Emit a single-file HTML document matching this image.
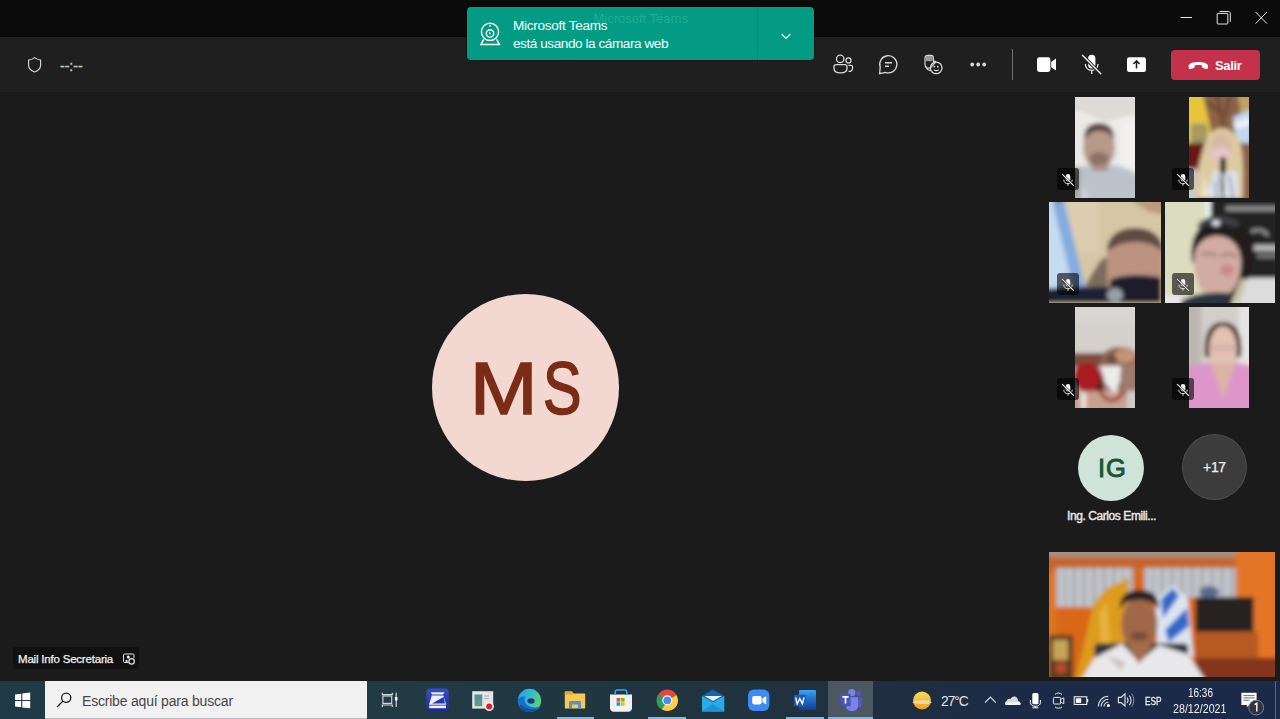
<!DOCTYPE html>
<html><head><meta charset="utf-8">
<style>
*{margin:0;padding:0;box-sizing:border-box}
html,body{width:1280px;height:719px;overflow:hidden;background:#1b1b1b;font-family:"Liberation Sans",sans-serif;position:relative}
.a{position:absolute}
svg{position:absolute;overflow:visible}
.t{position:absolute;white-space:nowrap;line-height:1}
#title{left:0;top:0;width:1280px;height:37px;background:#0b0b0b}
#tool{left:0;top:36px;width:1280px;height:57px;background:#1f1f1f;border-top:1px solid #080808;border-bottom:1px solid #191919}
#stage{left:0;top:93px;width:1280px;height:588px;background:#1b1b1b}
#toast{left:466.5px;top:7px;width:347px;height:53px;box-shadow:0 0 0 1px rgba(0,0,0,.35);background:#039b83;border-radius:4px;overflow:hidden}
#avatar{left:432px;top:294px;width:187px;height:187px;border-radius:50%;background:#f2d8d0}
#taskbar{left:0;top:681px;width:1280px;height:38px;background:linear-gradient(90deg,#1f3a44 0%,#213a44 32%,#20343f 55%,#1f2e40 70%,#1b2b47 81%,#1b2a4a 100%)}
#search{left:45px;top:681px;width:322px;height:38px;background:#f1f1f1;border-bottom:1px solid #b4b8bc}
.vid{position:absolute;overflow:hidden}
.s{position:absolute;filter:blur(2px)}
.badge{position:absolute;width:22px;height:22px;border-radius:3px;background:rgba(0,0,0,.6)}
</style></head><body>
<div id="title" class="a"></div>
<div id="tool" class="a"></div>
<div id="stage" class="a"></div>

<!-- window controls -->
<svg style="left:0;top:0" width="1280" height="37">
  <line x1="1180.5" y1="17.5" x2="1192" y2="17.5" stroke="#e6e6e6" stroke-width="1"/>
  <rect x="1217.2" y="13.4" width="10.6" height="10.6" rx="0.8" fill="none" stroke="#e6e6e6" stroke-width="1"/>
  <path d="M1219.6 11.5 H1228.6 C1229.6 11.5 1230.3 12.2 1230.3 13.2 V21.8" fill="none" stroke="#e6e6e6" stroke-width="1"/>
  <path d="M1255.6 12 L1267 23.6 M1267 12 L1255.6 23.6" stroke="#e6e6e6" stroke-width="1"/>
</svg>
<!-- toolbar left -->
<svg style="left:0;top:0" width="200" height="93">
  <path d="M34.6 57.6 C32.5 59.2 30.6 59.9 28.6 60 V65.3 C28.6 68.4 30.6 70.5 34.6 72 C38.6 70.5 40.6 68.4 40.6 65.3 V60 C38.6 59.9 36.7 59.2 34.6 57.6 Z" fill="none" stroke="#d6d6d6" stroke-width="1.15"/>
</svg>
<div class="t" style="left:60px;top:58.5px;font-size:14px;color:#c4c4c4;-webkit-text-stroke:0.4px #c4c4c4">--:--</div>

<!-- toolbar right icons -->
<svg style="left:0;top:0" width="1280" height="93">
  <g fill="none" stroke="#d8d8d8" stroke-width="1.3">
    <!-- people -->
    <circle cx="840.2" cy="58.9" r="3.7"/>
    <circle cx="848.5" cy="60.4" r="2.5"/>
    <path d="M834 66.6 C834 65.4 835 64.6 836.2 64.6 H844.8 C846 64.6 847 65.4 847 66.6 V68.6 C847 71.4 844.3 72.9 840.5 72.9 C836.7 72.9 834 71.4 834 68.6 Z"/>
    <path d="M848.4 65.3 H850.9 C851.9 65.3 852.6 65.9 852.6 66.9 V68 C852.6 70.4 851 71.5 848.6 71.4"/>
    <!-- chat -->
    <path d="M880.2 67.2 A8.6 8.6 0 1 1 885.4 72.4 L879.6 73.6 Z"/>
    <path d="M885 62.8 H892 M885 66.2 H889" stroke-width="1.4"/>
    <!-- reactions -->
    <circle cx="936.2" cy="67.9" r="5.8"/>
    <path d="M926.2 66.5 C926.6 69 928.5 70.6 931 70.6"/>
    <path d="M933.9 69.6 C935.2 71 937.4 71 938.7 69.6" stroke-width="1.1"/>
    <path d="M925 58 C925 56.2 926.5 55.3 928.5 55.3 H931 C932.6 55.3 933.4 56.5 933.4 58 V61.6 L934.4 61.2 C935.4 60.9 936 61.9 935.3 62.6 L931.2 67.2 C930.5 67.9 929.6 68.2 928.6 68.2 C926.5 68.2 925 66.6 925 64.2 Z" stroke-width="1.2"/>
  </g>
  <g fill="#d8d8d8">
    <rect x="925.8" y="56" width="6.8" height="5.2" rx="1.2" fill="#9a9a9a"/>
    <circle cx="934.4" cy="66.7" r="0.85"/><circle cx="937.8" cy="66.7" r="0.85"/>
    <circle cx="972.2" cy="64.5" r="1.9"/><circle cx="978.2" cy="64.5" r="1.9"/><circle cx="984.2" cy="64.5" r="1.9"/>
  </g>
  <line x1="1012.5" y1="49" x2="1012.5" y2="80" stroke="#707070" stroke-width="1"/>
  <!-- camera -->
  <g fill="#ffffff">
    <rect x="1037" y="57.3" width="13.4" height="14.6" rx="2.4"/>
    <path d="M1051.2 62 L1056 58.6 V70.6 L1051.2 67.2 Z"/>
  </g>
  <!-- mic off -->
  <rect x="1088.1" y="54.8" width="7.3" height="13.6" rx="3.65" fill="#ffffff"/>
  <path d="M1085.4 64 C1085.4 67.8 1088 70.3 1091.7 70.3 C1095.4 70.3 1098 67.8 1098 64 M1091.7 70.3 V74" fill="none" stroke="#e8e8e8" stroke-width="1.3"/>
  <path d="M1083 56 L1100.5 73.6" stroke="#1f1f1f" stroke-width="3.4"/>
  <path d="M1082.4 55.3 L1100.8 73.8" stroke="#f0f0f0" stroke-width="1.4" stroke-linecap="round"/>
  <!-- share -->
  <rect x="1127" y="57.2" width="19" height="14.8" rx="2.2" fill="#ffffff"/>
  <path d="M1136.5 68.5 V61 M1133.4 64 L1136.5 60.9 L1139.6 64" fill="none" stroke="#1f1f1f" stroke-width="1.5"/>
</svg>
<div class="a" style="left:1171px;top:49.5px;width:89px;height:30px;background:#c4314b;border-radius:4px"></div>
<svg style="left:0;top:0" width="1280" height="93">
  <path d="M1188.6 67 C1188 65.2 1189.8 63.4 1192 62.8 C1195.8 61.8 1200.6 61.8 1204.6 62.8 C1206.8 63.4 1208.6 65.2 1208 67 L1207.6 68.4 C1207.4 69 1206.8 69.2 1206.2 69 L1202.8 68 C1202.2 67.8 1202 67.2 1202 66.6 V65.4 C1199.6 64.8 1197 64.8 1194.6 65.4 V66.6 C1194.6 67.2 1194.4 67.8 1193.8 68 L1190.4 69 C1189.8 69.2 1189.2 69 1189 68.4 Z" fill="#ffffff"/>
</svg>
<div class="t" style="left:1215px;top:58.5px;font-size:13px;font-weight:bold;color:#ffffff;letter-spacing:-0.35px">Salir</div>

<!-- toast -->
<div id="toast" class="a">
  <div class="t" style="left:127px;top:4.5px;font-size:13px;color:rgba(170,255,230,.16);-webkit-text-stroke:0.3px rgba(170,255,230,.1)">Microsoft Teams</div>
  <div class="a" style="left:290px;top:0;width:1px;height:53px;background:rgba(0,0,0,.14)"></div>
</div>
<svg style="left:0;top:0" width="1280" height="93">
  <g fill="none" stroke="#ffffff" stroke-width="1.4">
    <circle cx="490" cy="31.8" r="8.6"/>
    <circle cx="490" cy="33.4" r="3.7"/>
    <path d="M483.6 39.4 L481 44.4 H499.4 L496.6 39.4" stroke-width="1.5"/>
    <path d="M489.6 31.8 V33.8 H491" stroke-width="0.9"/>
  </g>
  <circle cx="490" cy="25.8" r="0.9" fill="#ffffff"/>
  <path d="M781.6 34 L786 38.4 L790.4 34" fill="none" stroke="#e8f6f3" stroke-width="1.2"/>
</svg>
<div class="t" style="left:513px;top:19px;font-size:13.6px;color:#f4fffc;letter-spacing:-0.3px">Microsoft Teams</div>
<div class="t" style="left:513px;top:36.5px;font-size:13.6px;color:#f4fffc;letter-spacing:-0.45px">está usando la cámara web</div>

<!-- main avatar -->
<div id="avatar" class="a"></div>
<div class="t" style="left:470px;top:350.5px;font-size:75px;color:#7b2c17;-webkit-text-stroke:1.7px #7b2c17;transform-origin:0 0;transform:scaleX(1.08)">M</div>
<div class="t" style="left:542.5px;top:350.5px;font-size:75px;color:#7b2c17;-webkit-text-stroke:1.7px #7b2c17;transform-origin:0 0;transform:scaleX(0.77)">S</div>

<svg width="0" height="0" style="left:0;top:0">
  <defs>
    <filter id="bl1" filterUnits="userSpaceOnUse" x="-30" y="-30" width="200" height="170"><feGaussianBlur stdDeviation="2"/></filter>
    <filter id="bl2" filterUnits="userSpaceOnUse" x="-30" y="-30" width="300" height="200"><feGaussianBlur stdDeviation="2.3"/></filter>
  </defs>
</svg>
<!-- thumb 1 -->
<div class="vid" style="left:1075px;top:97px;width:60px;height:101px;background:#e9e7e4">
<svg width="60" height="101"><g filter="url(#bl1)">
  <rect x="-10" y="-10" width="80" height="121" fill="#ebe9e6"/>
  <path d="M-10 -10 H70 V16 L60.7 18 L31.8 26.4 L0.6 14.7 L-10 14 Z" fill="#dedad6"/>
  <path d="M0 15 L31.8 26.4 L60.7 18" fill="none" stroke="#f6f5f3" stroke-width="2"/>
  <rect x="46" y="24" width="14" height="50" fill="#f2f1ef"/>
  <path d="M-6 101 V80 C-2 72 6 69 16 68 H36 C48 69 56 72 64 80 V111 H-6 Z" fill="#bcc2cc"/>
  <path d="M4 80 C8 90 12 96 14 101 H-6 V84 Z" fill="#d0d4da"/>
  <rect x="17" y="58" width="16" height="16" fill="#a88a7e"/>
  <ellipse cx="24" cy="51" rx="16" ry="21" fill="#b89a8c"/>
  <path d="M9 44 C8 32 14 26 24 26 C34 26 40 32 39 44 C36 36 30 34 24 34 C18 34 12 37 9 44 Z" fill="#584840"/>
  <ellipse cx="24" cy="62" rx="10" ry="7" fill="#8c7268"/>
  <rect x="-6" y="70" width="12" height="31" fill="#a8a4a2"/>
</g></svg></div>
<!-- thumb 2 -->
<div class="vid" style="left:1189px;top:97px;width:60px;height:101px;background:#8a6a4c">
<svg width="60" height="101"><g filter="url(#bl1)">
  <rect x="-10" y="-10" width="80" height="121" fill="#8a6246"/>
  <path d="M-10 -10 H12 C16 10 22 26 24 52 H-10 Z" fill="#e8c43e"/>
  <path d="M26 -10 L36 34 M42 -10 L36 20 M18 6 L30 14" stroke="#5a3a22" stroke-width="2.2" fill="none"/>
  <path d="M48 -10 H62 V12 L52 20 Z" fill="#c4a064"/>
  <path d="M44 20 L62 12 V48 H48 Z" fill="#c4d6ee"/>
  <path d="M44 26 L62 20 V28 L46 32 Z" fill="#eef2f8"/>
  <rect x="2" y="27" width="16" height="19" rx="3" fill="#8a9a6a"/>
  <rect x="5" y="31" width="9" height="10" fill="#b8985a"/>
  <rect x="-10" y="46" width="26" height="26" fill="#6a1412"/>
  <rect x="-10" y="72" width="18" height="40" fill="#c8c8c8"/>
  <rect x="48" y="46" width="22" height="60" fill="#8a6048"/>
  <path d="M7 101 C6 84 10 66 14 52 C17 40 24 31 32 31 C42 31 49 38 52 50 C55 64 54 84 54 101 Z" fill="#dccaa0"/>
  <path d="M12 70 C16 80 14 92 10 101 H22 Z" fill="#ece2c8"/>
  <ellipse cx="32" cy="50" rx="10.5" ry="13" fill="#d8b8a2"/>
  <ellipse cx="32" cy="57" rx="10" ry="7" fill="#e4c6ca"/>
  <path d="M18 101 L24 74 H48 L50 101 Z" fill="#dde2ea"/>
  <path d="M30 78 L34 101 M40 78 L44 101 M26 84 L28 101" stroke="#6a7a98" stroke-width="1.6"/>
  <rect x="31" y="60" width="6" height="17" rx="3" fill="#161616"/>
  <rect x="33" y="76" width="2" height="26" fill="#2a2a2a"/>
</g></svg></div>
<!-- thumb 3 -->
<div class="vid" style="left:1049px;top:202px;width:112px;height:101px;background:#d8c8a8">
<svg width="112" height="101"><g filter="url(#bl1)">
  <rect x="-10" y="-10" width="132" height="121" fill="#d6c6a6"/>
  <rect x="-10" y="-10" width="60" height="60" fill="#dccdb0"/>
  <path d="M70 -10 H122 V14 L100 10 L88 2 Z" fill="#b89c7c"/>
  <path d="M-10 -10 H1 L28 101 H-10 Z" fill="#c6daf0"/>
  <path d="M1 -10 H13 L40 101 H28 Z" fill="#84ace0"/>
  <path d="M4 -10 H16 L10 4 Z" fill="#8a7460"/>
  <path d="M36 84 L44 70 L52 58 L62 52 L62 86 Z" fill="#7c6c5c"/>
  <path d="M58 101 V50 C58 34 70 26 86 26 C102 26 114 34 114 52 V101 Z" fill="#bc9280"/>
  <path d="M58 50 C58 34 70 26 86 26 C102 26 114 34 114 50 C106 42 96 40 86 40 C74 40 64 44 58 50 Z" fill="#5e4c42"/>
  <path d="M61 101 V78 C70 72 100 72 112 76 V101 Z" fill="#1c1c2a"/>
  <path d="M-10 101 V88 C10 84 50 84 74 86 V101 Z" fill="#1e2434"/>
  <ellipse cx="66" cy="93" rx="8" ry="7" fill="#9aa0a8"/>
</g></svg></div>
<!-- thumb 4 -->
<div class="vid" style="left:1165px;top:202px;width:110px;height:101px;background:#262626">
<svg width="110" height="101"><g filter="url(#bl1)">
  <rect x="-10" y="-10" width="130" height="121" fill="#242424"/>
  <rect x="-10" y="-10" width="56" height="121" fill="#dcdcc0"/>
  <rect x="40" y="-10" width="6" height="80" fill="#e6ecec"/>
  <rect x="61" y="4" width="55" height="5" fill="#8a8a8a"/>
  <path d="M86 30 C92 26 100 28 103 34" fill="none" stroke="#9a9a9a" stroke-width="3"/>
  <rect x="89" y="43" width="25" height="6" fill="#b8b8b8"/>
  <rect x="92" y="52" width="22" height="4" fill="#7a7a7a"/>
  <path d="M27 60 C24 36 34 17 56 16 C76 15 88 28 88 48 C88 62 86 72 82 78 L66 80 Z" fill="#221c1c"/>
  <path d="M32 24 C38 12 66 11 75 22 L70 26 C62 20 42 20 36 27 Z" fill="#3c4046"/>
  <ellipse cx="51" cy="21" rx="4" ry="3" fill="#e0e4e8"/>
  <path d="M29 58 C29 44 38 34 52 34 C66 34 76 44 76 60 C76 80 68 95 52 96 C38 96 29 82 29 58 Z" fill="#d2aca2"/>
  <ellipse cx="62" cy="68" rx="7" ry="6" fill="#c68c88"/>
  <path d="M36 52 C42 50 48 52 52 54 M56 54 C62 51 68 52 72 55" stroke="#8a6a64" stroke-width="2" fill="none"/>
  <path d="M67 101 C70 88 76 80 84 76 H120 V111 H67 Z" fill="#dcdcdc"/>
  <path d="M66 101 L76 76 L82 78 L74 101 Z" fill="#c8c0a8"/>
  <path d="M14 101 C24 92 44 89 66 91 V106 H14 Z" fill="#2a3440"/>
  <rect x="-10" y="93" width="26" height="18" fill="#e6e6e6"/>
</g></svg></div>
<!-- thumb 5 -->
<div class="vid" style="left:1075px;top:307px;width:60px;height:101px;background:#d4d0cc">
<svg width="60" height="101"><g filter="url(#bl1)">
  <rect x="-10" y="-10" width="80" height="121" fill="#d4d0cc"/>
  <rect x="-10" y="-10" width="80" height="25" fill="#d8d6d2"/>
  <rect x="-10" y="46" width="40" height="14" fill="#7a4c3a"/>
  <path d="M24 60 C24 46 34 40 44 40 C54 40 62 44 64 50 V90 H24 Z" fill="#8c6454"/>
  <ellipse cx="50" cy="49" rx="11" ry="7" fill="#c49474"/>
  <ellipse cx="37" cy="52" rx="5" ry="4" fill="#6a4a40"/>
  <path d="M-10 101 V84 C10 82 40 82 70 84 V111 H-10 Z" fill="#c8a090"/>
  <path d="M17 66 L28 66 L28 84 L17 84 Z" fill="#3a1414"/>
  <ellipse cx="12" cy="70" rx="14" ry="15" fill="#a81a22"/>
  <path d="M46 58 L62 56 V90 L46 88 Z" fill="#9c7c6c"/>
  <path d="M25 59 L46 59 L45 74 L40 87 L30 76 Z" fill="#ececec"/>
  <path d="M25 83 C30 96 42 97 48 84" fill="none" stroke="#a02028" stroke-width="3.2"/>
  <rect x="6" y="85" width="5" height="17" fill="#ece6e0"/>
  <rect x="52" y="84" width="10" height="20" fill="#d0ccc8"/>
</g></svg></div>
<!-- thumb 6 -->
<div class="vid" style="left:1189px;top:307px;width:60px;height:101px;background:#d0ccc8">
<svg width="60" height="101"><g filter="url(#bl1)">
  <rect x="-10" y="-10" width="80" height="121" fill="#d2cec9"/>
  <rect x="-10" y="-10" width="22" height="121" fill="#bcb6b0"/>
  <rect x="50" y="-10" width="20" height="121" fill="#e6e4e2"/>
  <path d="M16 50 C14 28 20 15 34 15 C48 15 54 28 52 50 Z" fill="#4c2c22"/>
  <ellipse cx="34" cy="42" rx="14" ry="23" fill="#e2c2b2"/>
  <path d="M21 38 H47 V44 H21 Z" fill="#c8a8a0" opacity=".6"/>
  <path d="M-10 111 V64 C0 58 14 56 22 56 L34 90 L46 56 C54 56 62 58 70 64 V111 Z" fill="#dc96ca"/>
  <path d="M22 56 L34 92 L46 56 Z" fill="#dcb4a4"/>
</g></svg></div>
<!-- self view -->
<div class="vid" style="left:1049px;top:552px;width:226px;height:125px;background:#d86818">
<svg width="226" height="125"><g filter="url(#bl2)">
  <rect x="-20" y="-20" width="266" height="165" fill="#d86818"/>
  <rect x="-20" y="-20" width="266" height="25" fill="#a29282"/>
  <rect x="-20" y="5" width="266" height="11" fill="#c4662c"/>
  <rect x="7" y="16" width="77" height="39" fill="#b2b6bc"/>
  <rect x="95" y="16" width="92" height="30" fill="#b2b6bc"/>
  <path d="M12 16 V55 M20 16 V55 M30 16 V55 M40 16 V55 M50 16 V55 M60 16 V55 M70 16 V55 M78 16 V55 M100 16 V46 M108 16 V46 M118 16 V46 M128 16 V46 M138 16 V46 M148 16 V46 M158 16 V46 M168 16 V46 M178 16 V46" stroke="#cfd3d8" stroke-width="2.4"/>
  <rect x="187" y="-5" width="59" height="110" fill="#e27626"/>
  <rect x="-20" y="20" width="27" height="80" fill="#e0741e"/>
  <path d="M44 52 L58 36 L80 26 L76 90 L56 98 L38 130 L26 130 L36 88 Z" fill="#dc9c1e"/>
  <path d="M50 60 L58 50 L62 96 L52 98 Z" fill="#f0c050" opacity=".6"/>
  <rect x="0" y="83" width="24" height="45" fill="#5a3c22"/>
  <rect x="4" y="88" width="15" height="20" fill="#c8a458"/>
  <circle cx="12" cy="116" r="6" fill="#b84a2a"/>
  <path d="M106 47 L124.5 32.7 L139 47 L144.7 106 L124.5 95 L108 93 Z" fill="#dce4f0"/>
  <path d="M112 47 L124 36 L130 44 L114 66 Z M116 78 L138 56 L140 74 L120 90 Z" fill="#3068c8"/>
  <rect x="146.5" y="45" width="58" height="35" fill="#262220"/>
  <rect x="146.5" y="80.5" width="62.5" height="26" fill="#b45a22"/>
  <rect x="146.5" y="106" width="90" height="30" fill="#84341c"/>
  <ellipse cx="160" cy="40" rx="10" ry="6" fill="#5a6a8a"/>
  <rect x="45.6" y="91.5" width="93.5" height="14.5" rx="4" fill="#2c3038"/>
  <ellipse cx="90.5" cy="72" rx="18" ry="27" fill="#a06848"/>
  <path d="M71 58 C70 44 78 38 90.5 38 C103 38 111 44 110 58 C106 50 98 48 90.5 48 C82 48 74 50 71 58 Z" fill="#2a2220"/>
  <ellipse cx="90" cy="84" rx="9" ry="4" fill="#5a3a2a" opacity=".6"/>
  <path d="M31 130 L45.6 106 L73 91.5 L90 110 L110 93 L139 102.5 L157.6 130 Z" fill="#e8e8ea"/>
  <path d="M78 93 L90 112 L104 93 Z" fill="#a46c4c"/>
  <path d="M58 104 L76 110 L72 118 Z" fill="#b8b0a8" opacity=".7"/>
</g></svg></div>
<!-- badges -->
<div class="badge" style="left:1057px;top:168px"></div>
<div class="badge" style="left:1172px;top:168px"></div>
<div class="badge" style="left:1057px;top:273px"></div>
<div class="badge" style="left:1172px;top:273px"></div>
<div class="badge" style="left:1057px;top:378px"></div>
<div class="badge" style="left:1172px;top:378px"></div>
<svg style="left:0;top:0" width="1280" height="420">
  <defs>
    <g id="mo">
      <rect x="-2.3" y="-5.4" width="4.6" height="7.4" rx="2.3" fill="#f0f0f0"/>
      <path d="M-4.2 0.2 C-4.2 2.8 -2.4 4.2 0 4.2 C2.4 4.2 4.2 2.8 4.2 0.2 M0 4.2 V6.2" fill="none" stroke="#e0e0e0" stroke-width="1"/>
      <path d="M-5.2 -4.6 L5.6 6" stroke="#000" stroke-opacity=".7" stroke-width="2.4"/>
      <path d="M-5.6 -5.2 L5.6 6" stroke="#f0f0f0" stroke-width="1.1" stroke-linecap="round"/>
    </g>
  </defs>
  <use href="#mo" x="1068" y="179.5"/>
  <use href="#mo" x="1183" y="179.5"/>
  <use href="#mo" x="1068" y="284.5"/>
  <use href="#mo" x="1183" y="284.5"/>
  <use href="#mo" x="1068" y="389.5"/>
  <use href="#mo" x="1183" y="389.5"/>
</svg>

<!-- avatars -->
<div class="a" style="left:1078px;top:435px;width:66px;height:66px;border-radius:50%;background:#cfe3d9"></div>
<div class="t" style="left:1098px;top:456px;font-size:25.5px;color:#1a5636;-webkit-text-stroke:0.9px #1a5636;letter-spacing:0.8px">IG</div>
<div class="a" style="left:1182px;top:434px;width:65px;height:66px;border-radius:50%;background:#3c3c3c;border:1px solid #4e4e4e"></div>
<div class="t" style="left:1203px;top:460px;font-size:14px;color:#f0f0f0;letter-spacing:-0.3px;-webkit-text-stroke:0.25px #f0f0f0">+17</div>
<div class="t" style="left:1067px;top:510px;font-size:12px;color:#e6e6e6;letter-spacing:-0.42px;-webkit-text-stroke:0.45px #e6e6e6">Ing. Carlos Emili...</div>

<!-- name label -->
<div class="a" style="left:13px;top:647px;width:126px;height:22px;border-radius:3px;background:#111111"></div>
<div class="t" style="left:18px;top:654px;font-size:11.5px;color:#f2f2f2;letter-spacing:-0.2px;-webkit-text-stroke:0.25px #f2f2f2">Mail Info Secretaria</div>
<svg style="left:0;top:0" width="200" height="719">
  <path d="M128.5 662.5 H124.5 C123.9 662.5 123.5 662.1 123.5 661.5 V655 C123.5 654.4 123.9 654 124.5 654 H133 C133.6 654 134 654.4 134 655 V658" fill="none" stroke="#e6e6e6" stroke-width="1"/>
  <circle cx="128.3" cy="657" r="1.5" fill="#f2f2f2"/>
  <ellipse cx="126.6" cy="661" rx="1.1" ry="1.3" fill="#e0e0e0"/>
  <circle cx="131.6" cy="661.4" r="2.7" fill="#111" stroke="#e6e6e6" stroke-width="1.2"/>
</svg>


<div id="taskbar" class="a"></div>
<div class="a" style="left:828px;top:681px;width:45px;height:38px;background:#4b5862"></div>
<div class="a" style="left:557px;top:717px;width:37px;height:2px;background:#86b6de"></div>
<div class="a" style="left:648px;top:717px;width:38px;height:2px;background:#86b6de"></div>
<div class="a" style="left:786px;top:717px;width:38px;height:2px;background:#86b6de"></div>
<div class="a" style="left:828px;top:717px;width:45px;height:2px;background:#86b6de"></div>
<div class="a" style="left:1275px;top:681px;width:1px;height:38px;background:#5a6886"></div>
<div id="search" class="a"></div>
<div class="t" style="left:82px;top:693.5px;font-size:14px;color:#464646;letter-spacing:-0.2px">Escribe aquí para buscar</div>
<svg style="left:0;top:0" width="1280" height="719">
  <!-- windows logo -->
  <g fill="#ffffff">
    <path d="M15 694.6 L21.2 693.7 V700 H15 Z"/>
    <path d="M22.3 693.5 L30.2 692.6 V700 H22.3 Z"/>
    <path d="M15 701 H21.2 V707.2 L15 706.4 Z"/>
    <path d="M22.3 701 H30.2 V708.3 L22.3 707.4 Z"/>
  </g>
  <!-- search icon -->
  <g fill="none" stroke="#1a1a1a" stroke-width="1.3">
    <circle cx="66.2" cy="697.8" r="4.6"/>
    <path d="M62.9 701.1 L57 707"/>
  </g>
  <!-- task view -->
  <g fill="none" stroke="#d0d6da" stroke-width="1.2">
    <path d="M382.3 692.7 V694.6 H392.3 V692.7"/>
    <rect x="382.9" y="696" width="8.8" height="7.4"/>
    <path d="M382.3 706.9 V705 H392.3 V706.9"/>
    <path d="M396.2 692.7 V707"/>
  </g>
  <rect x="394.9" y="697" width="2.6" height="3.4" fill="#ffffff"/>
  <!-- scanner -->
  <defs>
    <linearGradient id="scg" x1="0" y1="0" x2="0" y2="1"><stop offset="0" stop-color="#3a4cc8"/><stop offset="1" stop-color="#1e2a9a"/></linearGradient>
    <linearGradient id="edg" x1="0" y1="0.2" x2="1" y2="0.6"><stop offset="0" stop-color="#2a9ee6"/><stop offset="0.45" stop-color="#2fbad0"/><stop offset="1" stop-color="#60d46a"/></linearGradient>
    <linearGradient id="wdg" x1="0" y1="0" x2="0" y2="1"><stop offset="0" stop-color="#41a5ee"/><stop offset="0.33" stop-color="#2b7cd3"/><stop offset="0.66" stop-color="#185abd"/><stop offset="1" stop-color="#103f91"/></linearGradient>
    <linearGradient id="sung" x1="0" y1="0" x2="0" y2="1"><stop offset="0" stop-color="#f8dc5a"/><stop offset="1" stop-color="#eea020"/></linearGradient>
  </defs>
  <rect x="426.4" y="688.6" width="22.3" height="22.9" rx="4" fill="url(#scg)"/>
  <path d="M430.6 692.2 H444.6 L443 694.4 H432.2 Z" fill="#e8eaf4"/>
  <path d="M431.8 695.6 H443.4 L446.2 704.8 H429 Z" fill="#eef0f8"/>
  <path d="M432 703.6 L443.6 697 L445 703.6 Z" fill="#1f3ba8"/>
  <rect x="429.2" y="705.6" width="16.8" height="2.6" fill="#f2f2f8"/>
  <!-- recorder -->
  <rect x="472.2" y="691.2" width="21" height="17.4" fill="#e4e4e4"/>
  <rect x="474.6" y="694.6" width="7.6" height="11.6" fill="#5a9a8a"/>
  <rect x="474.6" y="694.6" width="7.6" height="5" fill="#4a8ab0" opacity=".6"/>
  <path d="M484 696 H489 M484 698.5 H489" stroke="#a0a0a0" stroke-width="0.8"/>
  <circle cx="489.2" cy="706.4" r="4.6" fill="#f0f0f0"/>
  <circle cx="489.2" cy="706.4" r="3" fill="#d8202a"/>
  <!-- edge -->
  <circle cx="529.5" cy="700.4" r="11.6" fill="url(#edg)"/>
  <path d="M518 699.5 C518 707.5 523.5 712 529.5 712 C535.5 712 539.5 709 541 705.5 C538 708 532 708 528 705.5 C524 703 523.5 698.5 526 696.5 C522.5 696 519 697 518 699.5 Z" fill="#1670d2"/>
  <path d="M519.5 705 C521 709.5 525 712 529.5 712 C533 712 536 710.8 538 709 C533 710 526 709 522.5 705.5 Z" fill="#0e4fa0"/>
  <ellipse cx="531" cy="701" rx="3.6" ry="2.8" fill="#173f80"/>
  <!-- folder -->
  <path d="M564.8 692.6 C564.8 692 565.2 691.6 565.8 691.6 H572 L573.6 693.4 H584.4 C584.9 693.4 585.2 693.8 585.2 694.3 V707.8 C585.2 708.3 584.8 708.6 584.3 708.6 H565.7 C565.2 708.6 564.8 708.2 564.8 707.7 Z" fill="#f7c94f"/>
  <path d="M564.8 692.6 C564.8 692 565.2 691.6 565.8 691.6 H572 L573.6 693.4 L572 695 H564.8 Z" fill="#e8a93a"/>
  <path d="M569 708.6 V702.3 C569 701.6 569.5 701 570.2 701 H579.8 C580.5 701 581 701.6 581 702.3 V708.6 H578 V704.4 H572 V708.6 Z" fill="#4f92d8"/>
  <!-- store -->
  <path d="M610 694.6 H632 V708 C632 710 630.6 711.7 628.4 711.7 H613.6 C611.4 711.7 610 710 610 708 Z" fill="#f2f2f2"/>
  <path d="M615.2 695 V692.2 C615.2 690.8 616 690 617.4 690 H624.6 C626 690 626.8 690.8 626.8 692.2 V695" fill="none" stroke="#36a6e8" stroke-width="1.6"/>
  <rect x="616.6" y="698" width="3.6" height="3.6" fill="#f25022"/>
  <rect x="621" y="698" width="3.6" height="3.6" fill="#7fba00"/>
  <rect x="616.6" y="702.2" width="3.6" height="3.6" fill="#00a4ef"/>
  <rect x="621" y="702.2" width="3.6" height="3.6" fill="#ffb900"/>
  <!-- chrome -->
  <circle cx="667.3" cy="700.3" r="10.7" fill="#dd4b3e"/>
  <path d="M667.3 700.3 L658 695 A10.7 10.7 0 0 0 662 709.6 Z" fill="#1da462"/>
  <path d="M667.3 700.3 L662 709.6 A10.7 10.7 0 0 0 678 700.3 L676.6 695 Z" fill="#ffcd46"/>
  <path d="M667.3 700.3 L676.6 695 H667.3 Z" fill="#dd4b3e"/>
  <circle cx="667.3" cy="700.3" r="5" fill="#ffffff"/>
  <circle cx="667.3" cy="700.3" r="3.9" fill="#4a8af4"/>
  <!-- mail -->
  <path d="M702 696 L713 689.6 L724.2 696 V711.4 H702 Z" fill="#1464b4"/>
  <path d="M704.5 696 H721.8 L713 701 Z" fill="#f0f4f8"/>
  <path d="M702 696 L713 702.2 L724.2 696 V711.4 H702 Z" fill="#2aaae8"/>
  <path d="M702 711.4 L713 704 L724.2 711.4 Z" fill="#1e90d8"/>
  <!-- zoom -->
  <rect x="748" y="689.6" width="21.4" height="21.4" rx="6" fill="#3d8bf2"/>
  <rect x="752.2" y="696" width="9.4" height="8.4" rx="1.8" fill="#ffffff"/>
  <path d="M762.4 698.6 L766.2 696.2 V704.4 L762.4 702 Z" fill="#ffffff"/>
  <!-- word -->
  <rect x="799" y="690" width="17" height="20" rx="1" fill="url(#wdg)"/>
  <rect x="793.9" y="694.7" width="11.9" height="11.5" rx="1" fill="#1e5bb8"/>
  <path d="M795.6 697.4 L797.2 703.8 L799.8 698.6 L802.4 703.8 L804 697.4" fill="none" stroke="#ffffff" stroke-width="1.4"/>
  <!-- teams -->
  <circle cx="858.6" cy="693.6" r="2.5" fill="#5059c9"/>
  <path d="M855 697.2 H862 V703.5 C862 706 860.5 707.2 858.5 707.2 C856.5 707.2 855 706 855 703.5 Z" fill="#5059c9"/>
  <circle cx="851.8" cy="692.6" r="3.6" fill="#7b83eb"/>
  <path d="M846 697.2 H858 V706 C858 709.2 855.5 711.2 852 711.2 C848.5 711.2 846 709.2 846 706 Z" fill="#7b83eb"/>
  <rect x="840.2" y="694" width="10.5" height="12.2" rx="1" fill="#4b53bc"/>
  <path d="M842.4 696.8 H848.6 M845.5 696.8 V703.6" stroke="#ffffff" stroke-width="1.7"/>
  <!-- weather -->
  <circle cx="922" cy="700.5" r="9" fill="url(#sung)"/>
  <path d="M912 702.5 C915 700.5 918 700 921 700.5 C924 699.5 928 700 932 702.5 C928 704.5 918 704.5 912 702.5 Z" fill="#f0e0c8" opacity=".75"/>
  <!-- chevron -->
  <path d="M985 702.6 L990.4 697 L995.8 702.6" fill="none" stroke="#d8dde6" stroke-width="1.2"/>
  <!-- onedrive -->
  <path d="M1006.2 704.9 C1004.6 704.9 1004.6 701.6 1006.6 701.2 C1007 698.8 1009.4 698.2 1010.6 699 C1011.6 696.2 1015.6 695.4 1017.4 698.4 C1017.8 699.2 1018 700 1017.9 701 C1020.4 700.8 1021.4 704.9 1019.4 704.9 Z" fill="#d6dae2"/>
  <path d="M1006.2 704.9 C1004.6 704.9 1004.6 702.6 1006.6 702.2 H1019.4 C1021 702.6 1021 704.9 1019.4 704.9 Z" fill="#f4f6f8"/>
  <!-- mic -->
  <rect x="1032.3" y="693.1" width="6.2" height="11.2" rx="1.6" fill="#ffffff"/>
  <path d="M1030.4 700 V702.5 C1030.4 705 1032.5 706.3 1035.4 706.3 C1038.3 706.3 1040.4 705 1040.4 702.5 V700 M1035.4 706.3 V707.8 M1032.4 707.8 H1038.4" fill="none" stroke="#ffffff" stroke-width="1"/>
  <!-- meet now -->
  <g fill="none" stroke="#e8ecf2" stroke-width="1">
    <rect x="1053.4" y="697.4" width="7.2" height="6.6" rx="1"/>
    <path d="M1060.6 699.4 L1063.8 697.8 V703.6 L1060.6 702"/>
    <path d="M1055 694.4 C1057 692.6 1060 692.6 1062 694.4"/>
    <path d="M1055 707 C1057 708.6 1060 708.6 1062 707"/>
  </g>
  <!-- battery -->
  <rect x="1074.2" y="696.8" width="12.6" height="7.6" fill="none" stroke="#ffffff" stroke-width="1"/>
  <rect x="1075.8" y="698.3" width="5.4" height="4.6" fill="#ffffff"/>
  <rect x="1087" y="699" width="1.2" height="3.2" fill="#ffffff"/>
  <!-- wifi -->
  <g fill="none" stroke="#d8dce4" stroke-width="1.1">
    <path d="M1098.4 706.6 A10 10 0 0 1 1108.4 696.2"/>
    <path d="M1101.2 706.6 A7.2 7.2 0 0 1 1108.4 699.2"/>
    <path d="M1104 706.6 A4.4 4.4 0 0 1 1108.4 702.2"/>
  </g>
  <circle cx="1108.4" cy="705.6" r="1.5" fill="#ffffff"/>
  <!-- volume -->
  <g fill="none" stroke="#e6e9ee" stroke-width="1.1">
    <path d="M1118.4 697.4 H1121 L1125 693.8 V706 L1121 702.6 H1118.4 Z"/>
    <path d="M1127 697.6 C1128.4 698.8 1128.4 701.6 1127 702.8"/>
    <path d="M1129.4 695.6 C1131.6 697.6 1131.6 703 1129.4 705"/>
  </g>
  <path d="M1131.6 693.6 C1134.4 696.6 1134.4 703.4 1131.6 706.6" fill="none" stroke="#8a96aa" stroke-width="1"/>
  <!-- notification -->
  <path d="M1241.4 692.8 H1256.6 V704.9 H1249.2 L1246.8 707.3 V704.9 H1241.4 Z" fill="#ffffff"/>
  <path d="M1243.4 695.6 H1254.6 M1243.4 697.9 H1254.6 M1243.4 700.2 H1249.4" stroke="#50607a" stroke-width="0.9"/>
  <circle cx="1256.2" cy="707.6" r="7.4" fill="#2e3440" stroke="#7c8494" stroke-width="1"/>
  <path d="M1254.6 704.6 L1256.8 703.2 V711.6" fill="none" stroke="#ffffff" stroke-width="1.4"/>
</svg>
<div class="t" style="left:941px;top:695.3px;font-size:13.8px;color:#e2e6ea;letter-spacing:-1px">27°C</div>
<div class="t" style="left:1144.5px;top:695.5px;font-size:11.5px;color:#f0f2f4;-webkit-text-stroke:0.3px #f0f2f4;transform-origin:0 0;transform:scaleX(0.72)">ESP</div>
<div class="t" style="left:1187.5px;top:686.5px;font-size:12px;color:#f0f2f4;transform-origin:0 0;transform:scaleX(0.83)">16:36</div>
<div class="t" style="left:1173px;top:703px;font-size:12px;color:#f0f2f4;transform-origin:0 0;transform:scaleX(0.89)">28/12/2021</div>

</body></html>
